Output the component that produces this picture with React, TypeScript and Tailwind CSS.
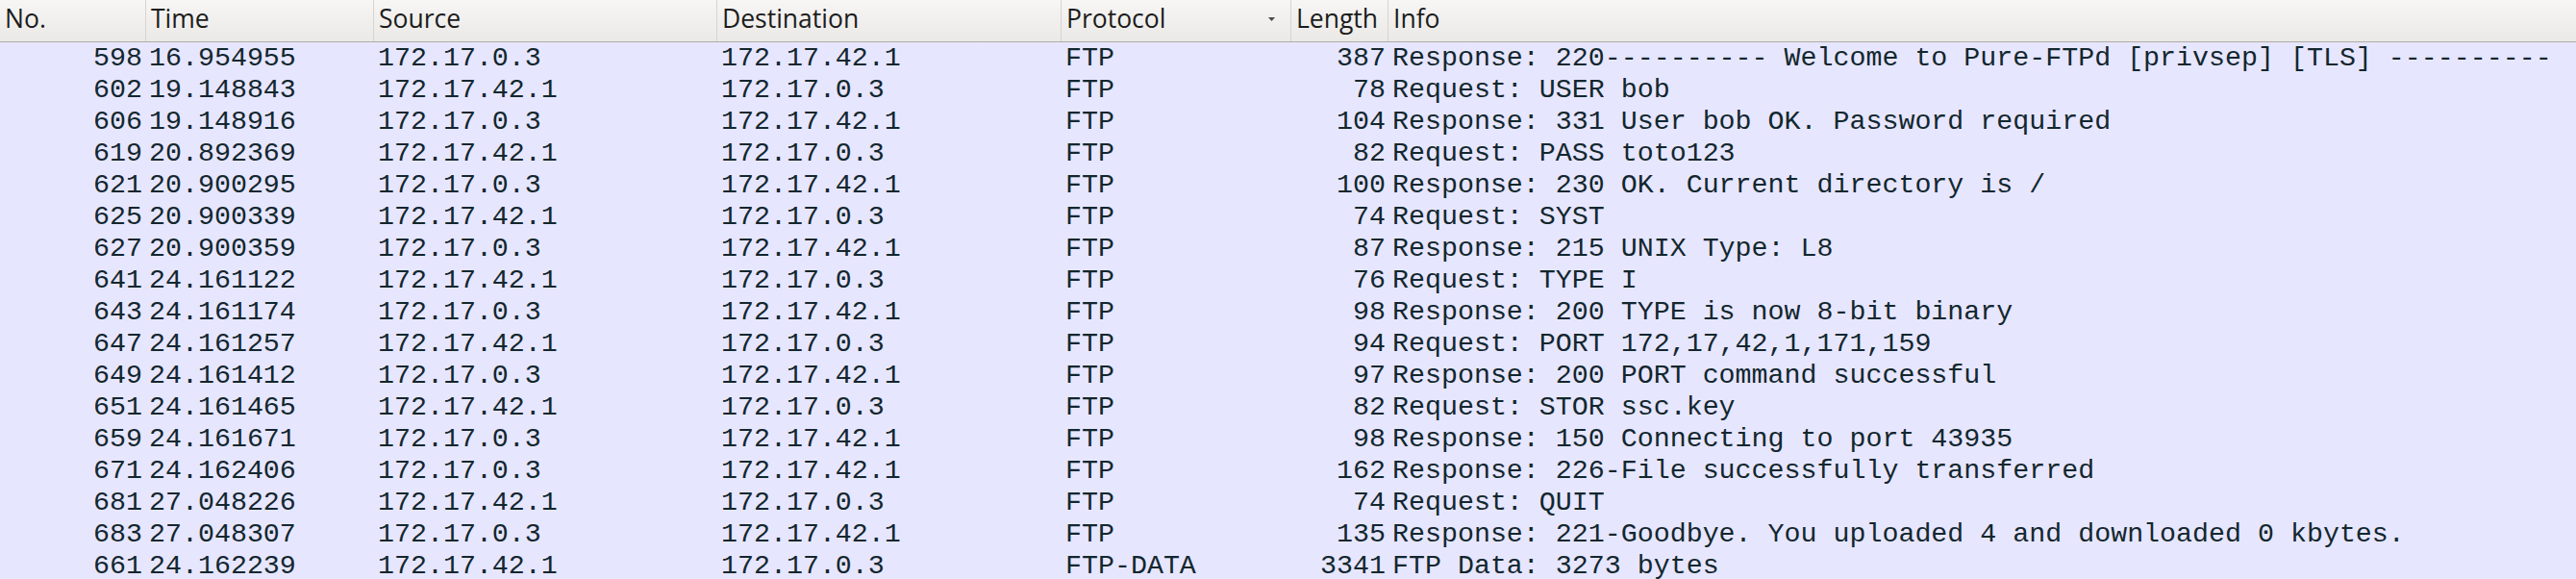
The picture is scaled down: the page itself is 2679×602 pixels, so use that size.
import React from "react";

type Packet = {
  no: number;
  time: string;
  src: string;
  dst: string;
  proto: string;
  len: number;
  info: string;
};

const packets: Packet[] = [
  { no: 598, time: "16.954955", src: "172.17.0.3", dst: "172.17.42.1", proto: "FTP", len: 387, info: "Response: 220---------- Welcome to Pure-FTPd [privsep] [TLS] ----------" },
  { no: 602, time: "19.148843", src: "172.17.42.1", dst: "172.17.0.3", proto: "FTP", len: 78, info: "Request: USER bob" },
  { no: 606, time: "19.148916", src: "172.17.0.3", dst: "172.17.42.1", proto: "FTP", len: 104, info: "Response: 331 User bob OK. Password required" },
  { no: 619, time: "20.892369", src: "172.17.42.1", dst: "172.17.0.3", proto: "FTP", len: 82, info: "Request: PASS toto123" },
  { no: 621, time: "20.900295", src: "172.17.0.3", dst: "172.17.42.1", proto: "FTP", len: 100, info: "Response: 230 OK. Current directory is /" },
  { no: 625, time: "20.900339", src: "172.17.42.1", dst: "172.17.0.3", proto: "FTP", len: 74, info: "Request: SYST" },
  { no: 627, time: "20.900359", src: "172.17.0.3", dst: "172.17.42.1", proto: "FTP", len: 87, info: "Response: 215 UNIX Type: L8" },
  { no: 641, time: "24.161122", src: "172.17.42.1", dst: "172.17.0.3", proto: "FTP", len: 76, info: "Request: TYPE I" },
  { no: 643, time: "24.161174", src: "172.17.0.3", dst: "172.17.42.1", proto: "FTP", len: 98, info: "Response: 200 TYPE is now 8-bit binary" },
  { no: 647, time: "24.161257", src: "172.17.42.1", dst: "172.17.0.3", proto: "FTP", len: 94, info: "Request: PORT 172,17,42,1,171,159" },
  { no: 649, time: "24.161412", src: "172.17.0.3", dst: "172.17.42.1", proto: "FTP", len: 97, info: "Response: 200 PORT command successful" },
  { no: 651, time: "24.161465", src: "172.17.42.1", dst: "172.17.0.3", proto: "FTP", len: 82, info: "Request: STOR ssc.key" },
  { no: 659, time: "24.161671", src: "172.17.0.3", dst: "172.17.42.1", proto: "FTP", len: 98, info: "Response: 150 Connecting to port 43935" },
  { no: 671, time: "24.162406", src: "172.17.0.3", dst: "172.17.42.1", proto: "FTP", len: 162, info: "Response: 226-File successfully transferred" },
  { no: 681, time: "27.048226", src: "172.17.42.1", dst: "172.17.0.3", proto: "FTP", len: 74, info: "Request: QUIT" },
  { no: 683, time: "27.048307", src: "172.17.0.3", dst: "172.17.42.1", proto: "FTP", len: 135, info: "Response: 221-Goodbye. You uploaded 4 and downloaded 0 kbytes." },
  { no: 661, time: "24.162239", src: "172.17.42.1", dst: "172.17.0.3", proto: "FTP-DATA", len: 3341, info: "FTP Data: 3273 bytes" },
];

const cols = "grid grid-cols-[152px_237px_357px_358px_239px_101px_1fr]";

function HeaderCell({ children, sort }: { children: React.ReactNode; sort?: boolean }) {
  return (
    <div className="relative flex h-full items-start border-r border-[#d6d4d0] pl-[5px] leading-[39px] last:border-r-0">
      <span>{children}</span>
      {sort ? (
        <svg className="absolute right-[16px] top-[18px]" width="7" height="4" viewBox="0 0 7 4">
          <path d="M0 0 L7 0 L3.5 4 Z" fill="#4a4a4a" />
        </svg>
      ) : null}
    </div>
  );
}

export default function App() {
  return (
    <div className="h-[602px] w-[2679px] overflow-hidden bg-[#e7e6ff]">
      <div
        className={`${cols} h-[44px] border-b border-[#aeada9] bg-gradient-to-b from-[#f7f6f5] to-[#ebe9e6] text-[26.5px] text-[#1c1c1c]`}
        style={{ fontFamily: '"Open Sans", "Noto Sans", sans-serif' }}
      >
        <HeaderCell>No.</HeaderCell>
        <HeaderCell>Time</HeaderCell>
        <HeaderCell>Source</HeaderCell>
        <HeaderCell>Destination</HeaderCell>
        <HeaderCell sort>Protocol</HeaderCell>
        <HeaderCell>Length</HeaderCell>
        <HeaderCell>Info</HeaderCell>
      </div>

      <div
        className="text-[28.3px] leading-[33px] text-[#12272e]"
        style={{ fontFamily: '"Liberation Mono", monospace' }}
      >
        {packets.map((p, i) => (
          <div key={i} className={`${cols} h-[33px] whitespace-pre bg-[#e7e6ff]`}>
            <span className="pr-[4px] text-right">{p.no}</span>
            <span className="pl-[3px]">{p.time}</span>
            <span className="pl-[4px]">{p.src}</span>
            <span className="pl-[4px]">{p.dst}</span>
            <span className="pl-[4px]">{p.proto}</span>
            <span className="pr-[3px] text-right">{p.len}</span>
            <span className="pl-[4px]">{p.info}</span>
          </div>
        ))}
      </div>
    </div>
  );
}
